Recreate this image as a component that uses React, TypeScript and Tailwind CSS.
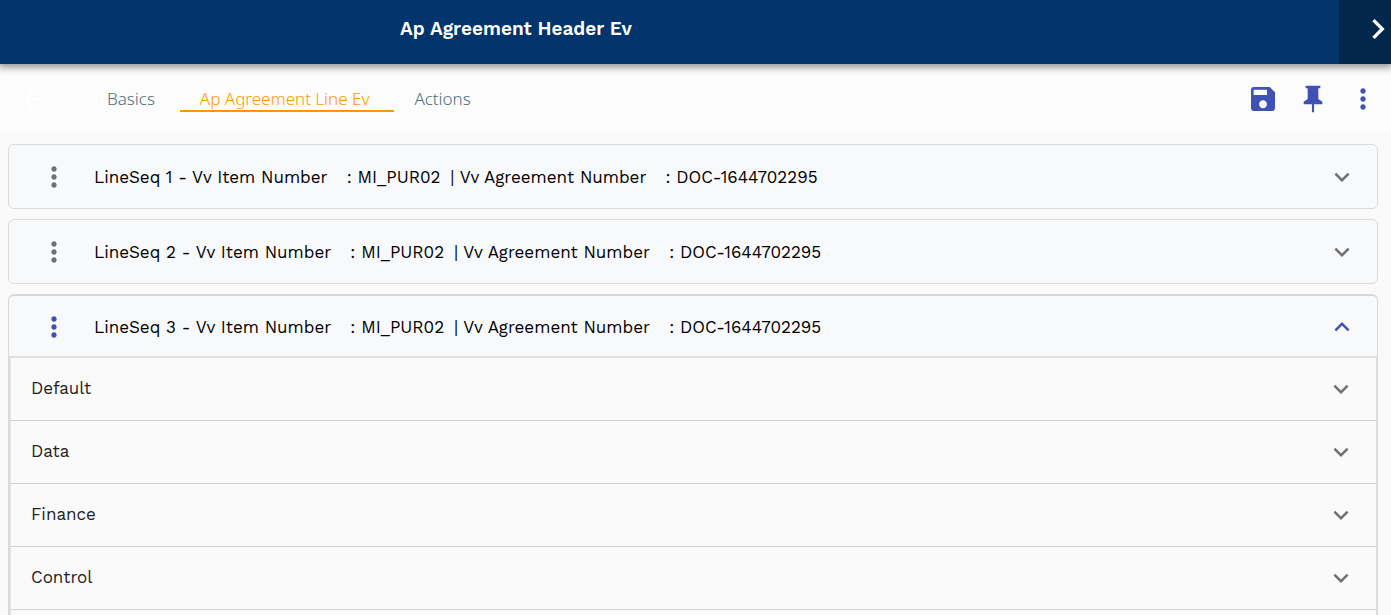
import { useState } from 'react';

const WORK = "font-['Work_Sans','Inter',sans-serif]";

const paths = {
  back: 'M20 11H7.83l5.59-5.59L12 4l-8 8 8 8 1.41-1.41L7.83 13H20v-2z',
  save: 'M17 3H5c-1.11 0-2 .9-2 2v14c0 1.1.89 2 2 2h14c1.1 0 2-.9 2-2V7l-4-4zm-5 16c-1.66 0-3-1.34-3-3s1.34-3 3-3 3 1.34 3 3-1.34 3-3 3zm3-10H5V5h10v4z',
  pin: 'M16 12V4h1.5V2H6.5v2H8v8l-3 2v2h6.2v6h1.6v-6H19v-2l-3-2z',
  more: 'M12 8c1.1 0 2-.9 2-2s-.9-2-2-2-2 .9-2 2 .9 2 2 2zm0 2c-1.1 0-2 .9-2 2s.9 2 2 2 2-.9 2-2-.9-2-2-2zm0 6c-1.1 0-2 .9-2 2s.9 2 2 2 2-.9 2-2-.9-2-2-2z',
  right: 'M10 6L8.59 7.41 13.17 12l-4.58 4.59L10 18l6-6z',
  down: 'M16.59 8.59L12 13.17 7.41 8.59 6 10l6 6 6-6z',
  up: 'M12 8l-6 6 1.41 1.41L12 10.83l4.59 4.58L18 14z',
};

function Icon({ name, className }: { name: keyof typeof paths; className: string }) {
  return (
    <svg viewBox="0 0 24 24" fill="currentColor" aria-hidden="true" className={`shrink-0 ${className}`}>
      <path d={paths[name]} />
    </svg>
  );
}

const tabs = ['Basics', 'Ap Agreement Line Ev', 'Actions'];
const sections = ['Default', 'Data', 'Finance', 'Control'];
const lines = [1, 2, 3];

export default function App() {
  const [tab, setTab] = useState(1);
  const [openLine, setOpenLine] = useState(3);

  return (
    <div className="h-screen overflow-hidden bg-[#fafafa]">
      <header className="relative flex h-16 items-stretch bg-[#03346b] text-white shadow-[0_1px_8px_2px_rgba(0,0,0,0.45)]">
        <h1 className={`flex-1 pt-[17px] pl-[400px] text-[19px] leading-6 font-semibold ${WORK}`}>
          Ap Agreement Header Ev
        </h1>
        <button aria-label="Expand panel" className="flex w-[52px] items-start justify-end overflow-hidden bg-[#02264c] pt-[9px]">
          <Icon name="right" className="-mr-[7px] size-10" />
        </button>
      </header>

      <div className="flex h-[70px] items-center bg-[#fcfcfc] pr-3">
        <button aria-label="Back" className="ml-[17px] text-white">
          <Icon name="back" className="size-8" />
        </button>
        <nav className="ml-[38px] flex flex-1 font-['Segoe_UI','Noto_Sans',sans-serif] text-[17px] leading-[22px] font-light">
          {tabs.map((label, i) => (
            <button
              key={label}
              onClick={() => setTab(i)}
              className={
                i === tab
                  ? 'border-b-2 border-[#ff9800] pt-0.5 pr-[25px] pl-5 text-[#ff9800]'
                  : 'border-b-2 border-transparent pt-0.5 pr-[25px] pl-5 text-[#4f6d7a]'
              }
            >
              {label}
            </button>
          ))}
        </nav>
        <div className="flex items-center gap-[18px] text-[#3f51b5]">
          <button aria-label="Save"><Icon name="save" className="size-8" /></button>
          <button aria-label="Pin"><Icon name="pin" className="size-8" /></button>
          <button aria-label="More actions"><Icon name="more" className="size-8" /></button>
        </div>
      </div>

      <main className={`flex flex-col gap-2.5 pt-2.5 pr-[13px] pl-2 text-[17px] leading-6 ${WORK}`}>
        {lines.map((n) => {
          const open = n === openLine;
          return (
            <section
              key={n}
              className={
                open
                  ? 'rounded-t-md border border-t-2 border-[#d6d8da] bg-[#f8f9fb]'
                  : 'rounded-md border border-[#d9dbde] bg-[#f8f9fb]'
              }
            >
              <div className={open ? 'flex h-[60px] items-center pt-0.5 pr-5 pl-[29px]' : 'flex h-[63px] items-center pr-5 pl-[29px]'}>
                <button aria-label={`Line ${n} options`} className={open ? 'text-[#3f51b5]' : 'text-[#707070]'}>
                  <Icon name="more" className="size-8" />
                </button>
                <button
                  aria-expanded={open}
                  onClick={() => setOpenLine(open ? 0 : n)}
                  className="ml-6 flex flex-1 items-center justify-between text-left text-black"
                >
                  <span className="whitespace-pre">
                    <span className="mr-2">{`LineSeq ${n} - Vv Item Number  `}</span>
                    <span className="mr-1">{': MI_PUR02 '}</span>
                    <span className="mr-2">{'| Vv Agreement Number  '}</span>
                    <span>: DOC-1644702295</span>
                  </span>
                  <Icon name={open ? 'up' : 'down'} className={open ? 'size-[30px] text-[#3f51b5]' : 'size-[30px] text-[#707070]'} />
                </button>
              </div>
              {open && (
                <div className="border-t-2 border-r border-l-2 border-[#e0e0e0] bg-[#fafafa] pb-16">
                  {sections.map((s) => (
                    <button
                      key={s}
                      className="flex h-[63px] w-full items-center justify-between border-b border-[#d0d0d0] pr-5 pl-5 text-left text-[#222]"
                    >
                      <span className="pb-0.5">{s}</span>
                      <Icon name="down" className="size-[30px] text-[#707070]" />
                    </button>
                  ))}
                </div>
              )}
            </section>
          );
        })}
      </main>
    </div>
  );
}
